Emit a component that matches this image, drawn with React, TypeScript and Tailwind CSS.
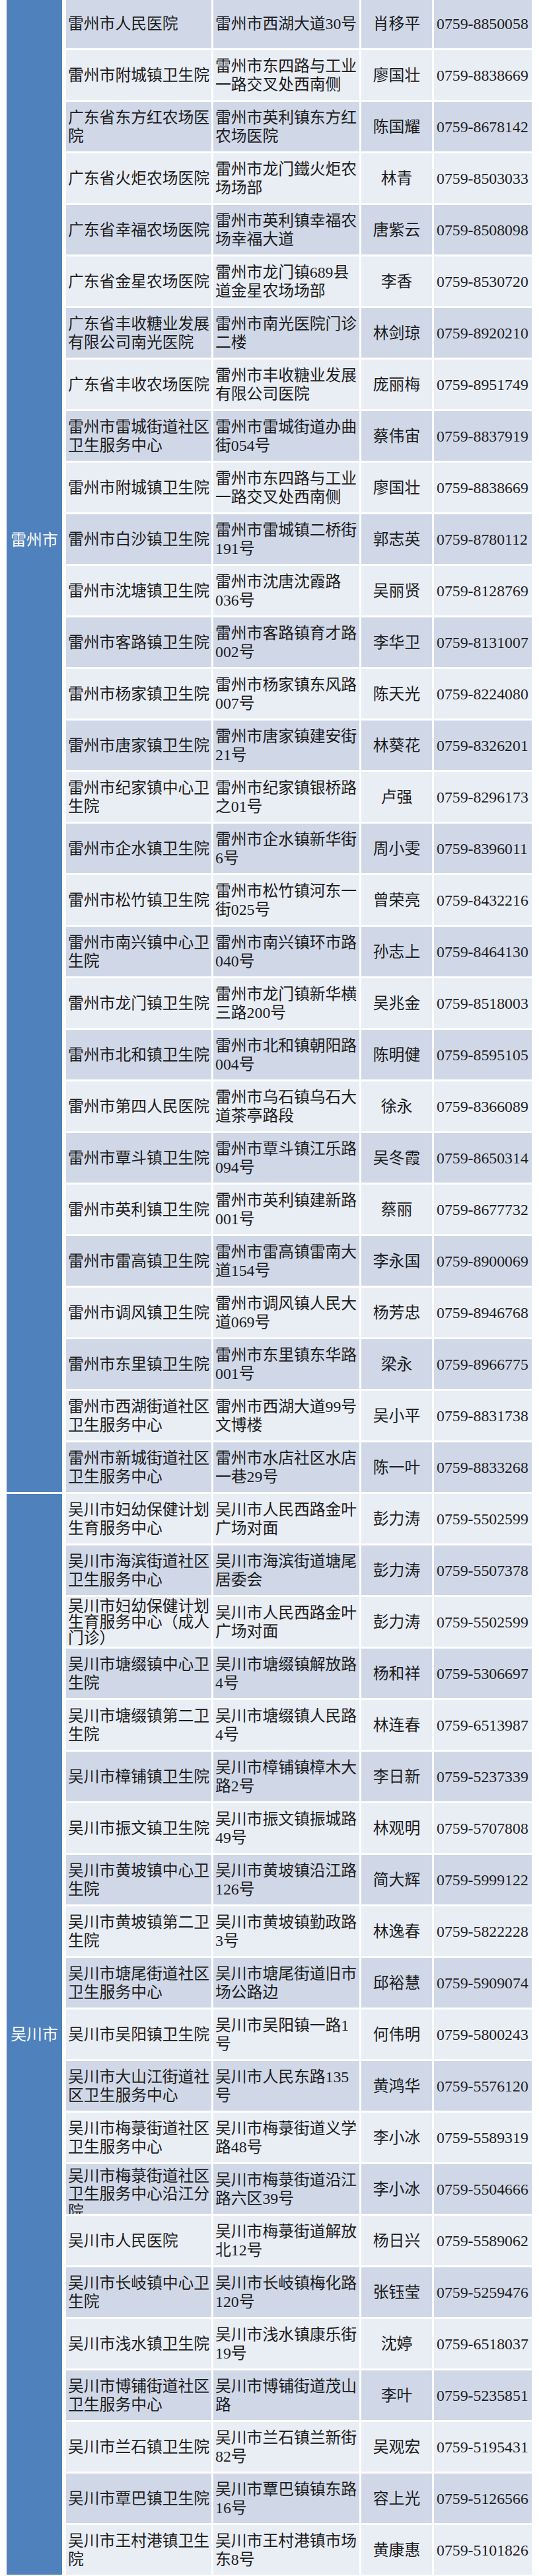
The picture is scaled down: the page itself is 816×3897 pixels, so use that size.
type Clinic = {
  name: string;
  address: string;
  contact: string;
  phone: string;
  nameClass?: string;
};

const LEIZHOU: Clinic[] = [
  { name: "雷州市人民医院", address: "雷州市西湖大道30号", contact: "肖移平", phone: "0759-8850058" },
  { name: "雷州市附城镇卫生院", address: "雷州市东四路与工业一路交叉处西南侧", contact: "廖国壮", phone: "0759-8838669" },
  { name: "广东省东方红农场医院", address: "雷州市英利镇东方红农场医院", contact: "陈国耀", phone: "0759-8678142" },
  { name: "广东省火炬农场医院", address: "雷州市龙门鐵火炬农场场部", contact: "林青", phone: "0759-8503033" },
  { name: "广东省幸福农场医院", address: "雷州市英利镇幸福农场幸福大道", contact: "唐紫云", phone: "0759-8508098" },
  { name: "广东省金星农场医院", address: "雷州市龙门镇689县道金星农场场部", contact: "李香", phone: "0759-8530720" },
  { name: "广东省丰收糖业发展有限公司南光医院", address: "雷州市南光医院门诊二楼", contact: "林剑琼", phone: "0759-8920210" },
  { name: "广东省丰收农场医院", address: "雷州市丰收糖业发展有限公司医院", contact: "庞丽梅", phone: "0759-8951749" },
  { name: "雷州市雷城街道社区卫生服务中心", address: "雷州市雷城街道办曲街054号", contact: "蔡伟宙", phone: "0759-8837919" },
  { name: "雷州市附城镇卫生院", address: "雷州市东四路与工业一路交叉处西南侧", contact: "廖国壮", phone: "0759-8838669" },
  { name: "雷州市白沙镇卫生院", address: "雷州市雷城镇二桥街191号", contact: "郭志英", phone: "0759-8780112" },
  { name: "雷州市沈塘镇卫生院", address: "雷州市沈唐沈霞路036号", contact: "吴丽贤", phone: "0759-8128769" },
  { name: "雷州市客路镇卫生院", address: "雷州市客路镇育才路002号", contact: "李华卫", phone: "0759-8131007" },
  { name: "雷州市杨家镇卫生院", address: "雷州市杨家镇东风路007号", contact: "陈天光", phone: "0759-8224080" },
  { name: "雷州市唐家镇卫生院", address: "雷州市唐家镇建安街21号", contact: "林葵花", phone: "0759-8326201" },
  { name: "雷州市纪家镇中心卫生院", address: "雷州市纪家镇银桥路之01号", contact: "卢强", phone: "0759-8296173" },
  { name: "雷州市企水镇卫生院", address: "雷州市企水镇新华街6号", contact: "周小雯", phone: "0759-8396011" },
  { name: "雷州市松竹镇卫生院", address: "雷州市松竹镇河东一街025号", contact: "曾荣亮", phone: "0759-8432216" },
  { name: "雷州市南兴镇中心卫生院", address: "雷州市南兴镇环市路040号", contact: "孙志上", phone: "0759-8464130" },
  { name: "雷州市龙门镇卫生院", address: "雷州市龙门镇新华横三路200号", contact: "吴兆金", phone: "0759-8518003" },
  { name: "雷州市北和镇卫生院", address: "雷州市北和镇朝阳路004号", contact: "陈明健", phone: "0759-8595105" },
  { name: "雷州市第四人民医院", address: "雷州市乌石镇乌石大道茶亭路段", contact: "徐永", phone: "0759-8366089" },
  { name: "雷州市覃斗镇卫生院", address: "雷州市覃斗镇江乐路094号", contact: "吴冬霞", phone: "0759-8650314" },
  { name: "雷州市英利镇卫生院", address: "雷州市英利镇建新路001号", contact: "蔡丽", phone: "0759-8677732" },
  { name: "雷州市雷高镇卫生院", address: "雷州市雷高镇雷南大道154号", contact: "李永国", phone: "0759-8900069" },
  { name: "雷州市调风镇卫生院", address: "雷州市调风镇人民大道069号", contact: "杨芳忠", phone: "0759-8946768" },
  { name: "雷州市东里镇卫生院", address: "雷州市东里镇东华路001号", contact: "梁永", phone: "0759-8966775" },
  { name: "雷州市西湖街道社区卫生服务中心", address: "雷州市西湖大道99号文博楼", contact: "吴小平", phone: "0759-8831738" },
  { name: "雷州市新城街道社区卫生服务中心", address: "雷州市水店社区水店一巷29号", contact: "陈一叶", phone: "0759-8833268" },
];

const WUCHUAN: Clinic[] = [
  { name: "吴川市妇幼保健计划生育服务中心", address: "吴川市人民西路金叶广场对面", contact: "彭力涛", phone: "0759-5502599" },
  { name: "吴川市海滨街道社区卫生服务中心", address: "吴川市海滨街道塘尾居委会", contact: "彭力涛", phone: "0759-5507378" },
  {
    name: "吴川市妇幼保健计划生育服务中心（成人门诊）",
    address: "吴川市人民西路金叶广场对面",
    contact: "彭力涛",
    phone: "0759-5502599",
    nameClass: "items-center leading-[24px] pl-[1px]",
  },
  { name: "吴川市塘缀镇中心卫生院", address: "吴川市塘缀镇解放路4号", contact: "杨和祥", phone: "0759-5306697" },
  { name: "吴川市塘缀镇第二卫生院", address: "吴川市塘缀镇人民路4号", contact: "林连春", phone: "0759-6513987" },
  { name: "吴川市樟铺镇卫生院", address: "吴川市樟铺镇樟木大路2号", contact: "李日新", phone: "0759-5237339" },
  { name: "吴川市振文镇卫生院", address: "吴川市振文镇振城路49号", contact: "林观明", phone: "0759-5707808" },
  { name: "吴川市黄坡镇中心卫生院", address: "吴川市黄坡镇沿江路126号", contact: "简大辉", phone: "0759-5999122" },
  { name: "吴川市黄坡镇第二卫生院", address: "吴川市黄坡镇勤政路3号", contact: "林逸春", phone: "0759-5822228" },
  { name: "吴川市塘尾街道社区卫生服务中心", address: "吴川市塘尾街道旧市场公路边", contact: "邱裕慧", phone: "0759-5909074" },
  { name: "吴川市吴阳镇卫生院", address: "吴川市吴阳镇一路1号", contact: "何伟明", phone: "0759-5800243" },
  { name: "吴川市大山江街道社区卫生服务中心", address: "吴川市人民东路135号", contact: "黄鸿华", phone: "0759-5576120" },
  { name: "吴川市梅菉街道社区卫生服务中心", address: "吴川市梅菉街道义学路48号", contact: "李小冰", phone: "0759-5589319" },
  {
    name: "吴川市梅菉街道社区卫生服务中心沿江分院",
    address: "吴川市梅菉街道沿江路六区39号",
    contact: "李小冰",
    phone: "0759-5504666",
    nameClass: "items-start pt-[5px] leading-[27px]",
  },
  { name: "吴川市人民医院", address: "吴川市梅菉街道解放北12号", contact: "杨日兴", phone: "0759-5589062" },
  { name: "吴川市长岐镇中心卫生院", address: "吴川市长岐镇梅化路120号", contact: "张钰莹", phone: "0759-5259476" },
  { name: "吴川市浅水镇卫生院", address: "吴川市浅水镇康乐街19号", contact: "沈婷", phone: "0759-6518037" },
  { name: "吴川市博铺街道社区卫生服务中心", address: "吴川市博铺街道茂山路", contact: "李叶", phone: "0759-5235851" },
  { name: "吴川市兰石镇卫生院", address: "吴川市兰石镇兰新街82号", contact: "吴观宏", phone: "0759-5195431" },
  { name: "吴川市覃巴镇卫生院", address: "吴川市覃巴镇镇东路16号", contact: "容上光", phone: "0759-5126566" },
  { name: "吴川市王村港镇卫生院", address: "吴川市王村港镇市场东8号", contact: "黄康惠", phone: "0759-5101826" },
];

function Row({ clinic, dark }: { clinic: Clinic; dark: boolean }) {
  const bg = dark ? "bg-[#d0d8e8]" : "bg-[#e9edf4]";
  return (
    <div className="flex h-[75px] gap-[3px]">
      <div
        className={`flex w-[220px] shrink-0 overflow-hidden pl-[3px] ${bg} ${
          clinic.nameClass ?? "items-center leading-[28px]"
        }`}
      >
        <span>{clinic.name}</span>
      </div>
      <div className={`flex w-[221px] shrink-0 items-center overflow-hidden pl-[3px] leading-[28px] ${bg}`}>
        <span>{clinic.address}</span>
      </div>
      <div className={`flex w-[107px] shrink-0 items-center justify-center leading-[28px] ${bg}`}>
        {clinic.contact}
      </div>
      <div className={`flex w-[148px] shrink-0 items-center whitespace-nowrap pl-[4px] leading-[28px] ${bg}`}>
        {clinic.phone}
      </div>
    </div>
  );
}

function Section({
  label,
  clinics,
  firstDark,
  labelClass,
}: {
  label: string;
  clinics: Clinic[];
  firstDark: boolean;
  labelClass: string;
}) {
  return (
    <div className="flex gap-[6px]">
      {/* region column */}
      <div className={`flex w-[84px] shrink-0 justify-center bg-[#4f81bd] text-white leading-[28px] ${labelClass}`}>
        {label}
      </div>
      <div className="flex flex-col gap-[3px]">
        {clinics.map((c, i) => (
          <Row key={`${c.name}-${i}`} clinic={c} dark={firstDark ? i % 2 === 0 : i % 2 === 1} />
        ))}
      </div>
    </div>
  );
}

export default function App() {
  return (
    <div className="h-[3897px] w-[816px] overflow-hidden bg-white">
      <div
        className="-mt-[2px] flex flex-col gap-[3px] pl-[10px] text-[23.8px] text-[#1c1c1c]"
        style={{ fontFamily: '"Liberation Serif", "Noto Sans CJK SC", serif' }}
      >
        <Section label="雷州市" clinics={LEIZHOU} firstDark labelClass="items-start pt-[805px]" />
        <Section label="吴川市" clinics={WUCHUAN} firstDark={false} labelClass="items-center" />
      </div>
    </div>
  );
}
